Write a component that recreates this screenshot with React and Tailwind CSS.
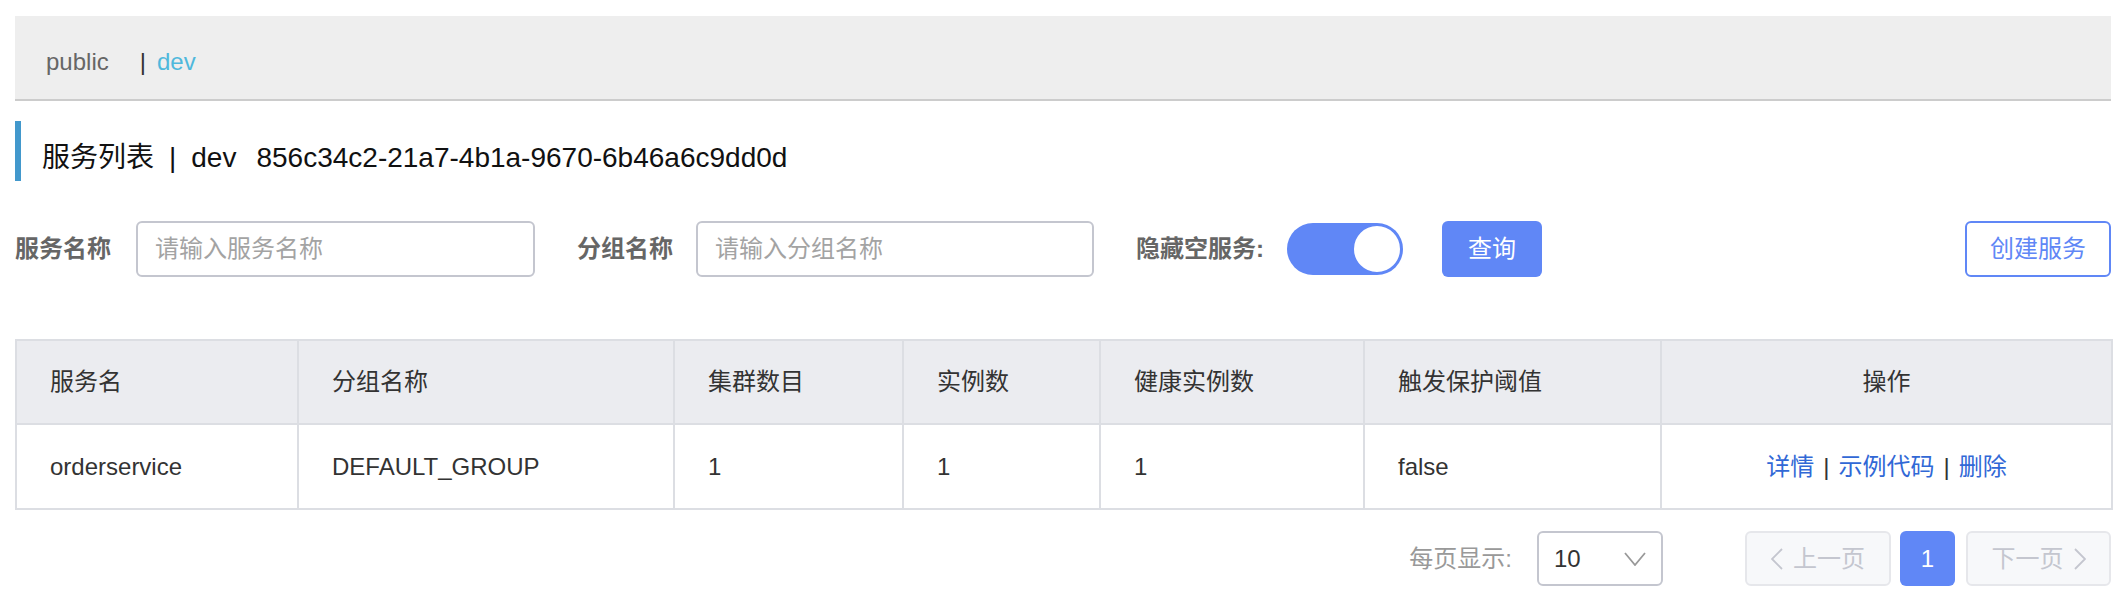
const FONT = "font-['Liberation_Sans','Noto_Sans_CJK_SC',sans-serif]";

const COLUMNS = [
  { key: "name", label: "服务名", w: "w-[282px]" },
  { key: "group", label: "分组名称", w: "w-[376px]" },
  { key: "clusters", label: "集群数目", w: "w-[229px]" },
  { key: "instances", label: "实例数", w: "w-[197px]" },
  { key: "healthy", label: "健康实例数", w: "w-[264px]" },
  { key: "threshold", label: "触发保护阈值", w: "w-[297px]" },
];

const ROWS = [
  { name: "orderservice", group: "DEFAULT_GROUP", clusters: "1", instances: "1", healthy: "1", threshold: "false" },
];

function NamespaceBar() {
  return (
    <div className="h-[85px] bg-[#eeeeee] border-b-2 border-[#cccccc] pl-[31px] pt-[32px] text-[24px] leading-[28px]">
      <span className="text-[#666666]">public</span>
      <span className="ml-[31px] text-[#333333]">|</span>
      <span className="ml-[11px] text-[#4eb8dc]">dev</span>
    </div>
  );
}

function Title() {
  return (
    <div className="mt-[20px] h-[60px] border-l-[6px] border-[#4298cc] pl-[21px] pt-[23px] text-[28px] leading-[28px] text-[#111111] whitespace-nowrap">
      <span>服务列表</span>
      <span className="mx-[15px]">|</span>
      <span>dev</span>
      <span className="ml-[20px]">856c34c2-21a7-4b1a-9670-6b46a6c9dd0d</span>
    </div>
  );
}

function Filters() {
  return (
    <div className="mt-[40px] flex items-center h-[56px] text-[24px]">
      <span className="font-bold text-[#666666]">服务名称</span>
      <input
        className="ml-[25px] w-[399px] h-[56px] border-2 border-[#c4c6cf] rounded-[6px] pl-[17px] outline-none placeholder:text-[#a3a3a3]"
        placeholder="请输入服务名称"
      />
      <span className="ml-[42px] font-bold text-[#666666]">分组名称</span>
      <input
        className="ml-[23px] w-[398px] h-[56px] border-2 border-[#c4c6cf] rounded-[6px] pl-[17px] outline-none placeholder:text-[#a3a3a3]"
        placeholder="请输入分组名称"
      />
      <span className="ml-[42px] font-bold text-[#666666]">隐藏空服务:</span>
      <div className="ml-[23px] w-[116px] h-[52px] rounded-full bg-[#6087f6] flex justify-end items-center p-[1px]">
        <span className="w-[50px] h-[50px] rounded-full bg-white border-2 border-[#6087f6]" />
      </div>
      <button className="ml-[39px] w-[100px] h-[56px] rounded-[6px] bg-[#6087f6] text-white">查询</button>
      <button className="ml-auto w-[146px] h-[56px] rounded-[6px] border-2 border-[#6087f6] text-[#6087f6] bg-white">
        创建服务
      </button>
    </div>
  );
}

function ServiceTable() {
  return (
    <table className="mt-[62px] w-full table-fixed border-collapse border-2 border-[#dcdee3] text-[24px] text-[#333333]">
      <colgroup>
        {COLUMNS.map((c) => (
          <col key={c.key} className={c.w} />
        ))}
        <col className="w-[451px]" />
      </colgroup>
      <thead>
        <tr className="bg-[#ebecf0]">
          {COLUMNS.map((c) => (
            <th key={c.key} className="h-[84px] border-2 border-[#dcdee3] pl-[33px] text-left font-normal">
              {c.label}
            </th>
          ))}
          <th className="h-[84px] border-2 border-[#dcdee3] text-center font-normal">操作</th>
        </tr>
      </thead>
      <tbody>
        {ROWS.map((r) => (
          <tr key={r.name}>
            {COLUMNS.map((c) => (
              <td key={c.key} className="h-[85px] border-2 border-[#dcdee3] pl-[33px]">
                {r[c.key]}
              </td>
            ))}
            <td className="h-[85px] border-2 border-[#dcdee3] text-center">
              <a className="text-[#3168d6]">详情</a>
              <span className="mx-[9px]">|</span>
              <a className="text-[#3168d6]">示例代码</a>
              <span className="mx-[9px]">|</span>
              <a className="text-[#3168d6]">删除</a>
            </td>
          </tr>
        ))}
      </tbody>
    </table>
  );
}

function Pagination() {
  return (
    <div className="mt-[21px] flex justify-end items-center h-[55px] text-[24px]">
      <span className="text-[#999999]">每页显示:</span>
      <div className="ml-[25px] w-[126px] h-[55px] border-2 border-[#c4c6cf] rounded-[6px] flex items-center pl-[15px] pr-[15px] text-[#333333]">
        <span>10</span>
        <svg className="ml-auto" width="22" height="14" viewBox="0 0 22 14" fill="none">
          <polyline points="1,1 11,13 21,1" stroke="#999999" strokeWidth="1.8" />
        </svg>
      </div>
      <button className="ml-[82px] w-[146px] h-[55px] rounded-[6px] border-2 border-[#e6e7eb] bg-[#f7f8fa] text-[#c4c6cf] flex items-center justify-center gap-[10px]">
        <svg width="12" height="22" viewBox="0 0 12 22" fill="none">
          <polyline points="11,1 1,11 11,21" stroke="#c4c6cf" strokeWidth="1.8" />
        </svg>
        <span>上一页</span>
      </button>
      <button className="ml-[9px] w-[55px] h-[55px] rounded-[6px] bg-[#6087f6] text-white">1</button>
      <button className="ml-[11px] w-[145px] h-[55px] rounded-[6px] border-2 border-[#e6e7eb] bg-[#f7f8fa] text-[#c4c6cf] flex items-center justify-center gap-[10px]">
        <span>下一页</span>
        <svg width="12" height="22" viewBox="0 0 12 22" fill="none">
          <polyline points="1,1 11,11 1,21" stroke="#c4c6cf" strokeWidth="1.8" />
        </svg>
      </button>
    </div>
  );
}

export default function App() {
  return (
    <div className={`${FONT} bg-white w-[2122px] h-[596px] pt-[16px] pl-[15px]`}>
      <div className="w-[2096px]">
        <NamespaceBar />
        <Title />
        <Filters />
        <ServiceTable />
        <Pagination />
      </div>
    </div>
  );
}
